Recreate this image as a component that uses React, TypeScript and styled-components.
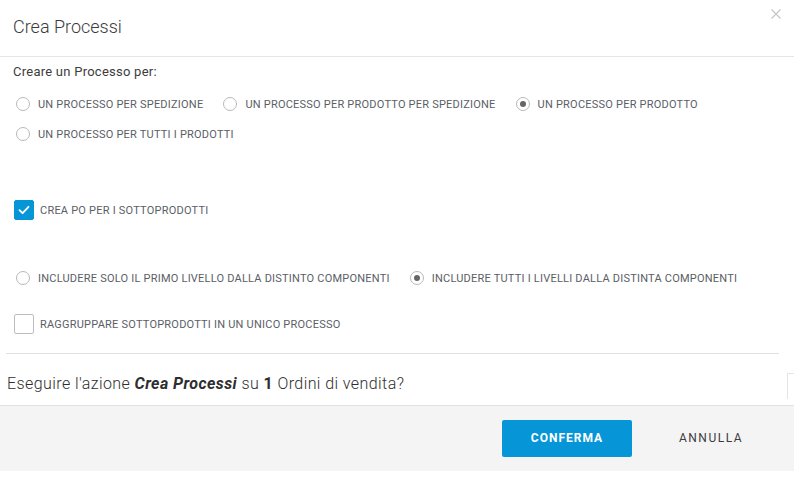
import React, { useState } from 'react';
import styled, { createGlobalStyle } from 'styled-components';

const GlobalStyle = createGlobalStyle`
  html, body {
    margin: 0;
    padding: 0;
    background: #ffffff;
  }
  body {
    font-family: Roboto, "Liberation Sans", sans-serif;
    color: #3c3c3c;
  }
  * {
    box-sizing: border-box;
  }
`;

const Dialog = styled.div`
  position: relative;
  width: 794px;
  height: 491px;
  background: #fff;
  display: flex;
  flex-direction: column;
`;

const Header = styled.div`
  height: 57px;
  border-bottom: 1px solid #e6e6e6;
  display: flex;
  align-items: center;
  justify-content: space-between;
  padding: 0 10px 0 13px;
`;

const Title = styled.h1`
  margin: 0;
  font-size: 18px;
  font-weight: 300;
  color: #3c3c3c;
  padding-bottom: 3px;
`;

const CloseButton = styled.button`
  border: 0;
  background: none;
  padding: 0;
  width: 14px;
  height: 14px;
  align-self: flex-start;
  margin-top: 8px;
  cursor: pointer;
  display: flex;
`;

const Body = styled.div`
  display: flex;
  flex-direction: column;
  padding: 5px 15px 0 6px;
`;

const SectionLabel = styled.div`
  font-size: 13px;
  line-height: 20px;
  color: #3c3c3c;
  padding-left: 7px;
  letter-spacing: 0.25px;
`;

const OptionGroup = styled.div<{ mt?: number }>`
  display: flex;
  flex-wrap: wrap;
  padding-left: 10px;
  margin-top: ${(p) => p.mt ?? 0}px;
`;

const OptionRow = styled.div`
  width: 100%;
  display: flex;
  height: 30px;
  align-items: center;
`;

const Option = styled.label`
  display: flex;
  align-items: center;
  margin-right: 20px;
  cursor: pointer;
`;

const RadioCircle = styled.span<{ checked?: boolean }>`
  width: 14px;
  height: 14px;
  border-radius: 50%;
  border: 1px solid #b9b9b9;
  display: flex;
  align-items: center;
  justify-content: center;
  margin-right: 8px;
  flex-shrink: 0;

  &::after {
    content: '';
    width: 6px;
    height: 6px;
    border-radius: 50%;
    background: #666;
    display: ${(p) => (p.checked ? 'block' : 'none')};
  }
`;

const OptionText = styled.span`
  font-size: 11px;
  color: #5a5e66;
  letter-spacing: 0.22px;
  white-space: nowrap;
`;

const CheckRow = styled.label<{ mt: number }>`
  display: flex;
  align-items: center;
  margin-top: ${(p) => p.mt}px;
  padding-left: 8px;
  height: 20px;
  cursor: pointer;
`;

const Box = styled.span<{ checked?: boolean }>`
  width: 20px;
  height: 20px;
  border-radius: 2px;
  border: 1px solid ${(p) => (p.checked ? '#0696d7' : '#bdbdbd')};
  background: ${(p) => (p.checked ? '#0696d7' : '#fff')};
  display: flex;
  align-items: center;
  justify-content: center;
  margin-right: 6px;
`;

const Divider = styled.hr`
  border: 0;
  border-top: 1px solid #e0e0e0;
  margin: 19px 0 0 0;
  width: 773px;
`;

const Question = styled.div`
  font-size: 16px;
  font-weight: 300;
  line-height: 20px;
  letter-spacing: 0.42px;
  padding: 20px 0 11px 1px;
  color: #2e2e2e;

  em {
    font-weight: 700;
  }
  strong {
    font-weight: 700;
  }
`;

const ScrollStub = styled.div`
  position: absolute;
  right: 0;
  top: 373px;
  width: 7px;
  height: 26px;
  border-left: 1px solid #e4e4e4;
  border-top: 1px solid #e4e4e4;
`;

const Footer = styled.div`
  height: 66px;
  background: #f4f4f4;
  border-top: 1px solid #e2e2e2;
  display: flex;
  align-items: center;
  justify-content: flex-end;
  gap: 14px;
  padding: 0 18px 1px 0;
`;

const Button = styled.button<{ primary?: boolean }>`
  width: 130px;
  height: 37px;
  border: 0;
  border-radius: 2px;
  background: ${(p) => (p.primary ? '#0696d7' : 'transparent')};
  color: ${(p) => (p.primary ? '#ffffff' : '#3c3c3c')};
  font-family: Roboto, "Liberation Sans", sans-serif;
  font-size: 12px;
  font-weight: ${(p) => (p.primary ? 700 : 400)};
  letter-spacing: ${(p) => (p.primary ? 1 : 1.5)}px;
  cursor: pointer;
`;

const Radio = ({ label, checked, onClick }: { label: string; checked?: boolean; onClick: () => void }) => (
  <Option onClick={onClick}>
    <RadioCircle checked={checked} />
    <OptionText>{label}</OptionText>
  </Option>
);

const Check = ({ label, checked, mt, onClick }: { label: string; checked: boolean; mt: number; onClick: () => void }) => (
  <CheckRow mt={mt} onClick={onClick}>
    <Box checked={checked}>
      {checked && (
        <svg width="12" height="10" viewBox="0 0 12 10">
          <path d="M1.5 5.2 L4.6 8.2 L10.5 1.8" fill="none" stroke="#fff" strokeWidth="1.8" strokeLinecap="round" strokeLinejoin="round" />
        </svg>
      )}
    </Box>
    <OptionText>{label}</OptionText>
  </CheckRow>
);

export default function App() {
  const [mode, setMode] = useState('prodotto');
  const [createPo, setCreatePo] = useState(true);
  const [level, setLevel] = useState('tutti');
  const [group, setGroup] = useState(false);

  return (
    <>
      <GlobalStyle />
      <Dialog>
        <Header>
          <Title>Crea Processi</Title>
          <CloseButton aria-label="Chiudi">
            <svg width="12" height="12" viewBox="0 0 12 12">
              <path d="M1.5 1.5 L10.5 10.5 M10.5 1.5 L1.5 10.5" stroke="#c4c4c4" strokeWidth="1.1" />
            </svg>
          </CloseButton>
        </Header>
        <Body>
          <SectionLabel>Creare un Processo per:</SectionLabel>
          <OptionGroup mt={7}>
            <OptionRow>
              <Radio label="UN PROCESSO PER SPEDIZIONE" checked={mode === 'spedizione'} onClick={() => setMode('spedizione')} />
              <Radio label="UN PROCESSO PER PRODOTTO PER SPEDIZIONE" checked={mode === 'prodsped'} onClick={() => setMode('prodsped')} />
              <Radio label="UN PROCESSO PER PRODOTTO" checked={mode === 'prodotto'} onClick={() => setMode('prodotto')} />
            </OptionRow>
            <OptionRow>
              <Radio label="UN PROCESSO PER TUTTI I PRODOTTI" checked={mode === 'tutti'} onClick={() => setMode('tutti')} />
            </OptionRow>
          </OptionGroup>
          <Check label="CREA PO PER I SOTTOPRODOTTI" checked={createPo} mt={51} onClick={() => setCreatePo(!createPo)} />
          <OptionGroup mt={43}>
            <OptionRow>
              <Radio label="INCLUDERE SOLO IL PRIMO LIVELLO DALLA DISTINTO COMPONENTI" checked={level === 'primo'} onClick={() => setLevel('primo')} />
              <Radio label="INCLUDERE TUTTI I LIVELLI DALLA DISTINTA COMPONENTI" checked={level === 'tutti'} onClick={() => setLevel('tutti')} />
            </OptionRow>
          </OptionGroup>
          <Check label="RAGGRUPPARE SOTTOPRODOTTI IN UN UNICO PROCESSO" checked={group} mt={21} onClick={() => setGroup(!group)} />
          <Divider />
          <Question>
            Eseguire l'azione <em>Crea Processi</em> su <strong>1</strong> Ordini di vendita?
          </Question>
        </Body>
        <ScrollStub />
        <Footer>
          <Button primary>CONFERMA</Button>
          <Button>ANNULLA</Button>
        </Footer>
      </Dialog>
    </>
  );
}
